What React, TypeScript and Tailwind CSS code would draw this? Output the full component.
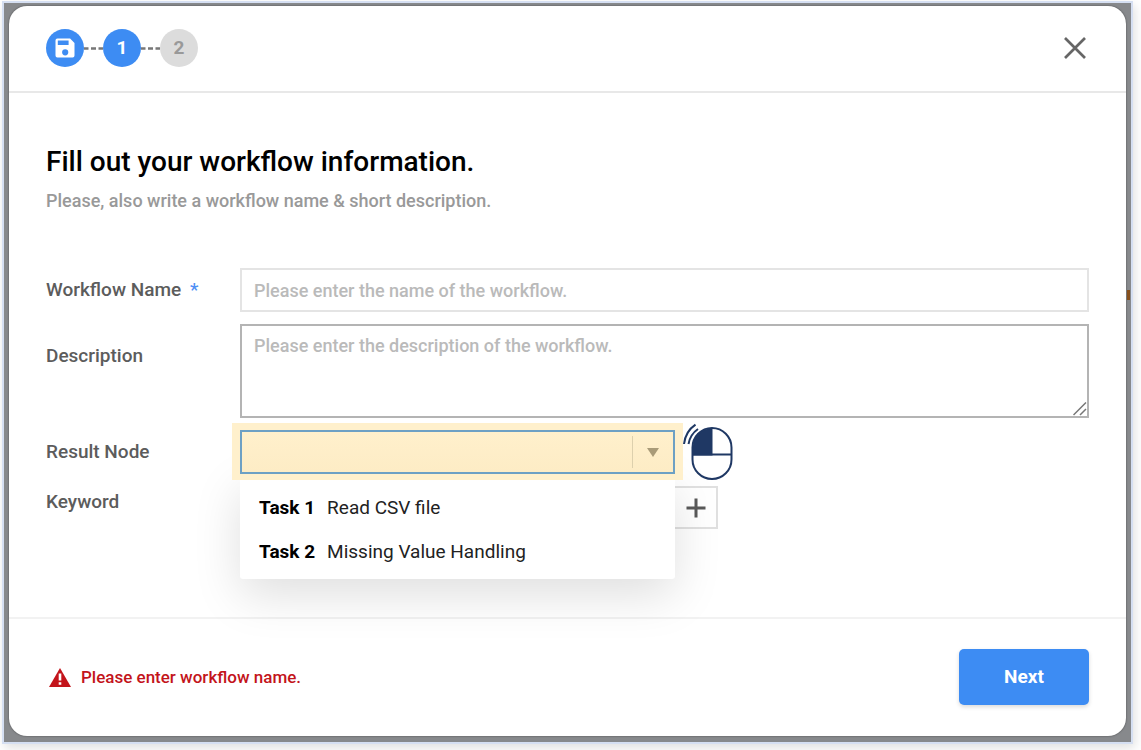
import { useState } from "react";

const tasks = [
  { id: "Task 1", name: "Read CSV file" },
  { id: "Task 2", name: "Missing Value Handling" },
];

const labelClass = "text-[19px] leading-6 font-medium text-[#5c5c5c]";

function SaveIcon() {
  return (
    <svg viewBox="0 0 20 20" className="size-5" aria-hidden="true">
      <path
        fill="#fff"
        fillRule="evenodd"
        d="M2.4 0.5h12.7l4.4 4.4v12.7a1.9 1.9 0 0 1-1.9 1.9H2.4a1.9 1.9 0 0 1-1.9-1.9V2.4A1.9 1.9 0 0 1 2.4 0.5zM2.8 2.6v4.3h10.8V2.6zM10.2 11.2a3.1 3.1 0 1 0 0 6.2a3.1 3.1 0 0 0 0-6.2z"
      />
    </svg>
  );
}

function Dots() {
  return (
    <svg viewBox="0 0 19 3" className="h-[3px] w-[19px]" aria-hidden="true">
      <path d="M0 1.5H4.5M7 1.5h5M14.5 1.5h4.500" stroke="#777" strokeWidth="2.600" />
    </svg>
  );
}

function MouseIcon() {
  return (
    <svg viewBox="0 0 50 58" className="h-[58px] w-[50px]" fill="none" stroke="#1f3864" aria-hidden="true">
      <path d="M29.5 5.500C17 5.500 10 12 10 23v9.500H29.500z" fill="#1f3864" stroke="none" />
      <rect x="9.500" y="5" width="39" height="51" rx="19.500" strokeWidth="2" />
      <path d="M10 31.500H48" strokeWidth="2" />
      <path d="M1 21C2 13 6 6 12.500 1.700M5.500 21C6.500 15 10 9.500 15 6" strokeWidth="2" />
    </svg>
  );
}

export default function App() {
  const [name, setName] = useState("");
  const [result, setResult] = useState("");

  return (
    <div className="overflow-hidden bg-white pt-px pr-2 pb-[6px] pl-[2px] font-[Roboto,'Liberation_Sans',sans-serif]">
      <div className="relative border-2 border-[#d5dff2] bg-[#87898c] pt-[3px] pr-[5px] pb-[6px] pl-[5px] shadow-[2px_4px_10px_rgba(0,0,0,0.12)]">
        <span className="absolute top-[287px] right-px h-[10px] w-[3px] bg-[#87501c]" />
        <main className="rounded-[18px] bg-white shadow-[0_0_2px_rgba(0,0,0,0.5)]">
          <header className="flex items-center justify-between border-b-2 border-[#e8e8e8] pt-[23px] pr-[39px] pb-[24px] pl-[37px]">
            <ol className="flex items-center text-[19px] leading-6 font-bold">
              <li className="flex size-[38px] items-center justify-center rounded-full bg-[#3d8cf3]" aria-label="Save">
                <SaveIcon />
              </li>
              <Dots />
              <li className="flex size-[38px] items-center justify-center rounded-full bg-[#3d8cf3] text-white">1</li>
              <Dots />
              <li className="flex size-[38px] items-center justify-center rounded-full bg-[#dcdcdc] text-[#999]">2</li>
            </ol>
            <button type="button" aria-label="Close">
              <svg viewBox="0 0 24 24" className="size-6" aria-hidden="true">
                <path d="M2 2L22 22M22 2L2 22" stroke="#666" strokeWidth="2.700" />
              </svg>
            </button>
          </header>

          <section className="px-[37px] pt-[51px] pb-[88px]">
            <h1 className="text-[28px] leading-9 font-medium text-black">Fill out your workflow information.</h1>
            <p className="mt-[9px] text-[18px] leading-6 font-medium text-[#999]">
              Please, also write a workflow name &amp; short description.
            </p>

            <div className="mt-[55px] grid grid-cols-[194px_1fr] gap-y-3">
              <label htmlFor="name" className={`${labelClass} pt-[10px]`}>
                Workflow Name <span className="ml-1 text-[#4f8ff5]">*</span>
              </label>
              <input
                id="name"
                value={name}
                onChange={(e) => setName(e.target.value)}
                placeholder="Please enter the name of the workflow."
                className="h-11 w-full border-2 border-[#e4e4e4] px-3 text-[18px] font-medium outline-none placeholder:text-[#bababa]"
              />

              <label htmlFor="description" className={`${labelClass} pt-5`}>
                Description
              </label>
              <div className="relative flex">
                <textarea
                  id="description"
                  placeholder="Please enter the description of the workflow."
                  className="h-[94px] w-full resize-none border-2 border-[#b4b4b4] px-3 py-2 text-[18px] leading-6 font-medium outline-none placeholder:text-[#bababa]"
                />
                <svg viewBox="0 0 14 14" className="absolute right-[2px] bottom-[2px] size-[14px]" aria-hidden="true">
                  <path d="M0.500 13L13 0.500M7 13L13 7" stroke="#777" strokeWidth="1.500" />
                </svg>
              </div>

              <label htmlFor="result" className={`${labelClass} pt-[10px]`}>
                Result Node
              </label>
              <div className="relative z-10 h-11 w-[435px]">
                <ul className="absolute top-11 left-0 w-full rounded-b-[3px] bg-white pt-3 pb-[5px] text-[19px] leading-6 shadow-[0_16px_48px_rgba(0,0,0,0.13)]">
                  {tasks.map((task) => (
                    <li key={task.id}>
                      <button
                        type="button"
                        onClick={() => setResult(task.id)}
                        className="flex w-full gap-3 px-[19px] py-[10px] text-left"
                      >
                        <span className="font-bold text-black">{task.id}</span>
                        <span className="text-[#222]">{task.name}</span>
                      </button>
                    </li>
                  ))}
                </ul>
                <div className="absolute -inset-x-2 -top-[7px] -bottom-[6px] bg-[#fff0cc]" />
                <select
                  id="result"
                  value={result}
                  onChange={(e) => setResult(e.target.value)}
                  className="relative h-11 w-full appearance-none border-2 border-[#6da0c4] bg-linear-to-b from-[#fff0cc] to-[#fdecc5] px-4 text-[19px] outline-none"
                >
                  <option value=""></option>
                  {tasks.map((task) => (
                    <option key={task.id}>{task.id}</option>
                  ))}
                </select>
                <div className="pointer-events-none absolute inset-y-0 right-4 flex items-center gap-[14px]">
                  <span className="h-8 w-px bg-[#ddd0ad]" />
                  <svg viewBox="0 0 12 9" className="h-[9px] w-3" aria-hidden="true">
                    <path d="M0 0H12L6 9z" fill="#a99b78" />
                  </svg>
                </div>
                <div className="pointer-events-none absolute -top-[7px] left-full ml-2">
                  <MouseIcon />
                </div>
              </div>

              <label htmlFor="keyword" className={`${labelClass} pt-1`}>
                Keyword
              </label>
              <div className="flex">
                <input id="keyword" className="h-[43px] w-[435px] border-2 border-[#e0e0e0] px-3 text-[19px] outline-none" />
                <button
                  type="button"
                  aria-label="Add keyword"
                  className="flex h-[43px] w-[43px] items-center justify-center border-2 border-l-0 border-[#e0e0e0] bg-white"
                >
                  <svg viewBox="0 0 20 20" className="size-5" aria-hidden="true">
                    <path d="M10 0.500V19.500M0.500 10H19.500" stroke="#595959" strokeWidth="3" />
                  </svg>
                </button>
              </div>
            </div>
          </section>

          <footer className="flex items-center justify-between border-t-2 border-[#f2f2f2] pt-[30px] pr-[37px] pb-[31px] pl-10">
            <p role="alert" className="flex items-center gap-[10px] text-[17px] leading-6 font-medium text-[#c3141b]">
              <svg viewBox="0 0 22 19" className="h-[19px] w-[22px]" aria-hidden="true">
                <path d="M11 0L22 19H0z" fill="#c3141b" />
                <path d="M11 5.500V12.500M11 14.200V16.800" stroke="#fff" strokeWidth="2.600" />
              </svg>
              Please enter workflow name.
            </p>
            <button
              type="button"
              className="h-14 w-[130px] rounded-[5px] bg-[#3d8cf3] text-[19px] font-bold text-white shadow-[0_2px_4px_rgba(0,0,0,0.15)]"
            >
              Next
            </button>
          </footer>
        </main>
      </div>
    </div>
  );
}
